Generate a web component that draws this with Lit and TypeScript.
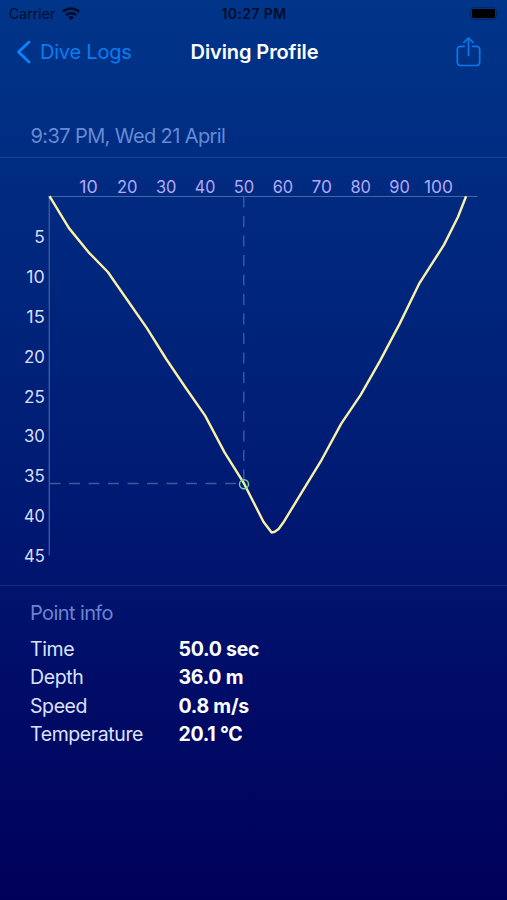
import { LitElement, html, svg, css } from "lit";
import { customElement } from "lit/decorators.js";

const SECONDS = [10, 20, 30, 40, 50, 60, 70, 80, 90, 100];
const METERS = [5, 10, 15, 20, 25, 30, 35, 40, 45];

// [time in seconds, depth in meters]
const DIVE: [number, number][] = [
  [0, 0], [5, 4], [10, 7], [15, 9.5], [20, 13], [25, 16.5], [30, 20.4],
  [35, 24], [40, 27.5], [45, 32.1], [50, 36], [55, 40.8], [57.1, 42.15],
  [57.9, 42.05], [58.9, 41.7], [60.1, 40.9], [65, 37], [70, 33], [75, 28.5],
  [80, 24.9], [85, 20.6], [90, 16], [95, 11], [101.4, 6.1], [105, 2.6], [107.1, 0],
];

@customElement("dive-chart")
class DiveChart extends LitElement {
  static styles = css`
    :host { display: block; }
    .chart { display: block; width: 507px; height: 427px; font-family: Inter, sans-serif; }
    .sec { fill: #b3a9f5; font-size: 17px; text-anchor: middle; }
    .met { fill: #d9defb; font-size: 17px; text-anchor: end; }
    .axis { stroke: #4666ab; stroke-width: 1.2; }
    .vaxis { stroke: #3e58a0; stroke-width: 1.4; }
    .guide { stroke: #41599b; stroke-width: 1.4; stroke-dasharray: 11 8.5; }
    .line { fill: none; stroke: #f9f2a6; stroke-width: 2.4; stroke-linejoin: round; }
    .dot { fill: none; stroke: #6fd8a0; stroke-width: 1.4; }
  `;

  render() {
    const x = (t: number) => 49.5 + t * 3.89;
    const y = (d: number) => 38.2 + d * 7.98;
    const points = DIVE.map(([t, d]) => `${x(t)},${y(d)}`).join(" ");
    return html`<svg class="chart" viewBox="0 0 507 427">
      ${SECONDS.map((s) => svg`<text class="sec" x=${x(s)} y="34.5" textLength=${s > 99 ? 29 : s === 10 ? 18.5 : 20.5} lengthAdjust="spacingAndGlyphs">${s}</text>`)}
      ${METERS.map((m) => svg`<text class="met" x="44.8" y=${y(m) + 6.8} textLength=${m === 5 ? 10.5 : m === 10 || m === 15 ? 18.5 : 20.8} lengthAdjust="spacingAndGlyphs">${m}</text>`)}
      <line class="axis" x1="49" y1="38.5" x2="477.5" y2="38.5" />
      <line class="vaxis" x1="49.3" y1="38" x2="49.3" y2="397.5" />
      <line class="guide" x1="243.8" y1="38.5" x2="243.8" y2="322" />
      <line class="guide" x1="49.5" y1="325.5" x2="240" y2="325.5" />
      <polyline class="line" points=${points} />
      <circle class="dot" cx="244" cy="326.3" r="4.5" />
    </svg>`;
  }
}

@customElement("app-root")
class AppRoot extends LitElement {
  static styles = css`
    :host {
      display: flex; flex-direction: column; box-sizing: border-box;
      width: 507px; height: 900px; overflow: hidden;
      font-family: Inter, sans-serif; white-space: nowrap;
      background: linear-gradient(#003589 0%, #002a80 22%, #001e76 48%, #000f6a 72%, #00005a 100%);
    }
    .status {
      display: grid; grid-template-columns: 1fr auto 1fr; align-items: center;
      height: 27px; padding: 0 8px 0 9px; color: #010d2b; font-size: 14px;
    }
    .carrier { display: flex; align-items: center; gap: 7px; letter-spacing: 0.05px; }
    .clock { font-weight: 600; letter-spacing: 0.38px; }
    .battery { justify-self: end; display: block; }
    .nav {
      display: grid; grid-template-columns: 1fr auto 1fr; align-items: center;
      height: 50px; padding: 0 26px 0 28px;
    }
    .back {
      display: flex; align-items: center; gap: 9px; margin-left: -12px;
      color: #0a7cf2; font-size: 20px; letter-spacing: -0.22px;
    }
    .title { margin: 0; color: #fff; font-size: 20px; font-weight: 600; letter-spacing: -0.1px; }
    .share { justify-self: end; display: block; }
    .date {
      display: flex; align-items: flex-end; height: 81px; box-sizing: border-box;
      padding: 0 30.5px 9px; color: #668bd3; font-size: 20px; letter-spacing: -0.6px;
      border-bottom: 1px solid #124292;
    }
    .rule { height: 1px; background: #172b7d; }
    .info { padding: 13px 30px; color: #6c84d0; }
    .heading { margin: 0; font-size: 20px; line-height: 28px; font-weight: 400; letter-spacing: -0.6px; }
    .rows {
      display: grid; grid-template-columns: 148.5px auto; margin: 7.5px 0 0;
      font-size: 19.5px; line-height: 28.5px;
    }
    .name { color: #dce1fb; letter-spacing: -0.4px; }
    .value { margin: 0; color: #fff; font-weight: 700; letter-spacing: -0.25px; }
  `;

  render() {
    const rows = [
      ["Time", "50.0 sec"], ["Depth", "36.0 m"], ["Speed", "0.8 m/s"], ["Temperature", "20.1 °C"],
    ];
    return html`
      <div class="status">
        <span class="carrier">Carrier
          <svg width="18" height="14" viewBox="0 0 18 14" fill="none" stroke="#010d2b" stroke-width="2.6">
            <path d="M0.8 4.9a11.6 11.6 0 0 1 16.4 0M3.9 8.2a7.2 7.2 0 0 1 10.2 0" />
            <path d="M9 13.3 6.1 10.4a4.2 4.2 0 0 1 5.8 0z" fill="#010d2b" stroke="none" />
          </svg>
        </span>
        <span class="clock">10:27 PM</span>
        <svg class="battery" width="29" height="13" viewBox="0 0 29 13">
          <rect x="0.6" y="0.6" width="25.8" height="11.8" rx="3" fill="none" stroke="#022668" />
          <rect x="2" y="2" width="23" height="9" rx="1.3" fill="#000" />
          <path d="M27.5 4.5q1.5 2 0 4z" fill="#022668" />
        </svg>
      </div>
      <div class="nav">
        <span class="back">
          <svg width="15" height="24" viewBox="0 0 15 24" fill="none" stroke="#0a84ff" stroke-width="2.8" stroke-linecap="round" stroke-linejoin="round">
            <path d="M13 2 2.5 12 13 22" />
          </svg>Dive Logs
        </span>
        <h1 class="title">Diving Profile</h1>
        <svg class="share" width="25" height="30" viewBox="0 0 25 30" fill="none" stroke="#0a78ea" stroke-width="1.7" stroke-linecap="round" stroke-linejoin="round">
          <path d="M8.2 9.3H4.6A3.3 3.3 0 0 0 1.3 12.6V25.2A3.3 3.3 0 0 0 4.6 28.5H20.4A3.3 3.3 0 0 0 23.7 25.2V12.6A3.3 3.3 0 0 0 20.4 9.3H16.8" />
          <path d="M12.5 18.5V1.2M8 5.4 12.5 1 17 5.4" />
        </svg>
      </div>
      <div class="date">9:37 PM, Wed 21 April</div>
      <dive-chart></dive-chart>
      <div class="rule"></div>
      <section class="info">
        <h2 class="heading">Point info</h2>
        <dl class="rows">
          ${rows.map(([n, v]) => html`<dt class="name">${n}</dt><dd class="value">${v}</dd>`)}
        </dl>
      </section>`;
  }
}
